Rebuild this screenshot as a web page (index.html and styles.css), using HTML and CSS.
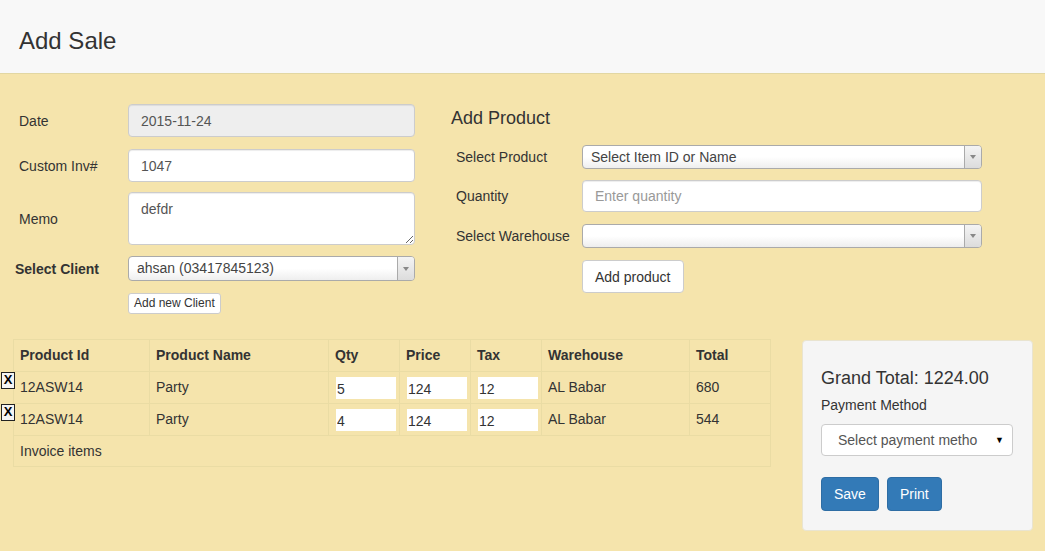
FILE: index.html
```html
<!DOCTYPE html>
<html>
<head>
<meta charset="utf-8">
<link rel="stylesheet" href="styles.css">
</head>
<body>
<header class="topbar"><h1 class="title">Add Sale</h1></header>
<main class="page">
  <section class="top">
    <div class="leftform">
      <div class="row r1">
        <label class="lbl">Date</label>
        <input class="fc fc-dis" value="2015-11-24" readonly>
      </div>
      <div class="row r2">
        <label class="lbl">Custom Inv#</label>
        <input class="fc" value="1047">
      </div>
      <div class="row r3">
        <label class="lbl">Memo</label>
        <textarea class="fc ta">defdr</textarea>
      </div>
      <div class="row r4">
        <label class="lbl lbl-b">Select Client</label>
        <div class="s2 s2-l"><span class="s2-text">ahsan (03417845123)</span><span class="s2-arrow"><i class="tri"></i></span></div>
      </div>
      <div class="row r5">
        <span class="lbl"></span>
        <button class="btn-xs">Add new Client</button>
      </div>
    </div>
    <div class="rightform">
      <h3 class="sub">Add Product</h3>
      <div class="rrow rr1">
        <label class="rlbl">Select Product</label>
        <div class="s2 s2-r"><span class="s2-text">Select Item ID or Name</span><span class="s2-arrow"><i class="tri"></i></span></div>
      </div>
      <div class="rrow rr2">
        <label class="rlbl">Quantity</label>
        <input class="fc fc-r" placeholder="Enter quantity">
      </div>
      <div class="rrow rr3">
        <label class="rlbl">Select Warehouse</label>
        <div class="s2 s2-r"><span class="s2-text"></span><span class="s2-arrow"><i class="tri"></i></span></div>
      </div>
      <div class="rrow rr4">
        <span class="rlbl"></span>
        <button class="btn-def">Add product</button>
      </div>
    </div>
  </section>
  <section class="bottom">
    <table class="items">
      <colgroup>
        <col class="c1"><col class="c2"><col class="c3"><col class="c4"><col class="c5"><col class="c6"><col class="c7">
      </colgroup>
      <thead>
        <tr><th>Product Id</th><th>Product Name</th><th>Qty</th><th>Price</th><th>Tax</th><th>Warehouse</th><th>Total</th></tr>
      </thead>
      <tbody>
        <tr class="irow">
          <td class="first"><span class="xbtn">X</span>12ASW14</td><td>Party</td>
          <td class="icell"><input class="cin" value="5"></td><td class="icell"><input class="cin" value="124"></td><td class="icell"><input class="cin" value="12"></td>
          <td>AL Babar</td><td>680</td>
        </tr>
        <tr class="irow">
          <td class="first"><span class="xbtn">X</span>12ASW14</td><td>Party</td>
          <td class="icell"><input class="cin" value="4"></td><td class="icell"><input class="cin" value="124"></td><td class="icell"><input class="cin" value="12"></td>
          <td>AL Babar</td><td>544</td>
        </tr>
        <tr class="frow"><td colspan="7">Invoice items</td></tr>
      </tbody>
    </table>
    <aside class="well">
      <h4 class="grand">Grand Total: 1224.00</h4>
      <div class="pm">Payment Method</div>
      <div class="psel"><span class="psel-text">Select payment metho</span><span class="psel-arrow">&#9660;</span></div>
      <div class="btns">
        <button class="btn-pri">Save</button>
        <button class="btn-pri">Print</button>
      </div>
    </aside>
  </section>
</main>
</body>
</html>
```

FILE: styles.css
```css
* { box-sizing: border-box; }
html, body { margin: 0; padding: 0; }
body {
  font-family: "Liberation Sans", Arial, Helvetica, sans-serif;
  font-size: 14px;
  color: #333;
  background: #f5e4ac;
  width: 1045px;
  height: 551px;
  overflow: hidden;
}
.topbar {
  height: 74px;
  background: #f8f8f8;
  border-bottom: 1px solid #e2d7a3;
  padding: 29px 0 0 19px;
}
.title {
  margin: 0;
  font-size: 24px;
  font-weight: normal;
  line-height: 24px;
  color: #333;
}
.page { padding-top: 30px; }
.top { display: flex; align-items: flex-start; }
.leftform { width: 415px; }
.row { display: flex; align-items: center; }
.lbl { width: 128px; padding-left: 19px; flex: none; color: #333; }
.lbl-b { font-weight: bold; padding-left: 15px; }
.r1 { margin-bottom: 12px; }
.r2 { margin-bottom: 10px; }
.r3 { margin-bottom: 11px; }
.r4 { margin-bottom: 12px; }
.fc {
  display: block;
  width: 287px;
  height: 33px;
  padding: 6px 12px;
  font-family: inherit;
  font-size: 14px;
  color: #555;
  background: #fff;
  border: 1px solid #ccc;
  border-radius: 4px;
  box-shadow: inset 0 1px 1px rgba(0,0,0,.075);
  outline: none;
  margin: 0;
}
.fc-dis { background: #eee; }
.fc::placeholder { color: #999; }
.ta { height: 53px; resize: vertical; padding-top: 6px; line-height: 20px; }
.s2 {
  display: flex;
  height: 25px;
  border: 1px solid #aaa;
  border-radius: 4px;
  background: linear-gradient(to bottom, #fff 0%, #fff 50%, #eee 100%);
  color: #444;
  overflow: hidden;
}
.s2-l { width: 287px; }
.s2-r { width: 400px; height: 24px; }
.s2-text { flex: 1; padding-left: 8px; line-height: 23px; white-space: nowrap; }
.s2-arrow {
  width: 17px;
  border-left: 1px solid #aaa;
  background: linear-gradient(to bottom, #f4f4f4 0%, #dcdcdc 100%);
  display: flex;
  align-items: center;
  justify-content: center;
}
.tri {
  width: 0; height: 0;
  border-left: 3px solid transparent;
  border-right: 3px solid transparent;
  border-top: 4px solid #888;
}
.btn-xs {
  height: 21px;
  padding: 0 5px;
  font-family: inherit;
  font-size: 12px;
  color: #333;
  background: #fff;
  border: 1px solid #ccc;
  border-radius: 3px;
  line-height: 19px;
}
.rightform { margin-left: 36px; padding-top: 4px; }
.sub {
  margin: 0 0 17px 0;
  font-size: 18px;
  font-weight: normal;
  line-height: 20px;
  color: #333;
}
.rrow { display: flex; align-items: center; }
.rlbl { width: 131px; padding-left: 5px; flex: none; color: #333; }
.rr1 { margin-bottom: 11px; }
.rr2 { margin-bottom: 12px; }
.rr3 { margin-bottom: 12px; }
.fc-r { width: 400px; height: 32px; }
.btn-def {
  height: 33px;
  padding: 0 12px;
  font-family: inherit;
  font-size: 14px;
  color: #333;
  background: #fff;
  border: 1px solid #ccc;
  border-radius: 4px;
}
.bottom { display: flex; align-items: flex-start; margin-top: 25px; padding-left: 13px; }
.items {
  width: 757px;
  border-collapse: collapse;
  table-layout: fixed;
}
.c1 { width: 136px; } .c2 { width: 179px; } .c3 { width: 71px; } .c4 { width: 71px; }
.c5 { width: 71px; } .c6 { width: 148px; } .c7 { width: 81px; }
.items th, .items td {
  border: 1px solid #eadca4;
  padding: 7px 7px 7px 6px;
  height: 32px;
  line-height: 17px;
  text-align: left;
  vertical-align: middle;
  white-space: nowrap;
}
.items th { font-weight: bold; color: #333; }
.items td { color: #333; }
.irow td { padding-top: 4px; padding-bottom: 4px; height: 32px; }
.items td.icell { padding-left: 7px; }
.frow td { height: 31px; padding-top: 6px; padding-bottom: 6px; }
.first { position: relative; }
.xbtn {
  position: absolute;
  left: -13px;
  top: 0;
  width: 14px;
  height: 17px;
  border: 1px solid #222;
  background: #f4f4f4;
  font-weight: bold;
  font-size: 13px;
  line-height: 14px;
  text-align: center;
  color: #000;
}
.cin {
  display: block;
  width: 60px;
  height: 22px;
  border: none;
  background: #fff;
  padding: 2px 1px 0 1px;
  margin: 0;
  font-family: inherit;
  font-size: 14px;
  color: #333;
  outline: none;
}
.well {
  width: 231px;
  height: 191px;
  margin-left: 31px;
  margin-top: 1px;
  background: #f5f5f5;
  border: 1px solid #e9e4d0;
  border-radius: 4px;
  padding: 27px 19px 0 18px;
}
.grand {
  margin: 0;
  font-size: 18px;
  font-weight: normal;
  line-height: 20px;
  color: #333;
}
.pm { margin-top: 7px; line-height: 20px; color: #333; }
.psel {
  margin-top: 9px;
  width: 192px;
  height: 32px;
  background: #fff;
  border: 1px solid #ccc;
  border-radius: 4px;
  display: flex;
  align-items: center;
  padding-left: 16px;
  color: #555;
  overflow: hidden;
}
.psel-text { width: 144px; white-space: nowrap; overflow: hidden; }
.psel-arrow { margin-left: 13px; font-size: 9px; color: #000; }
.btns { display: flex; gap: 8px; margin-top: 21px; }
.btn-pri {
  height: 34px;
  padding: 0 12px;
  font-family: inherit;
  font-size: 14px;
  color: #fff;
  background: #337ab7;
  border: 1px solid #2e6da4;
  border-radius: 4px;
}
```
